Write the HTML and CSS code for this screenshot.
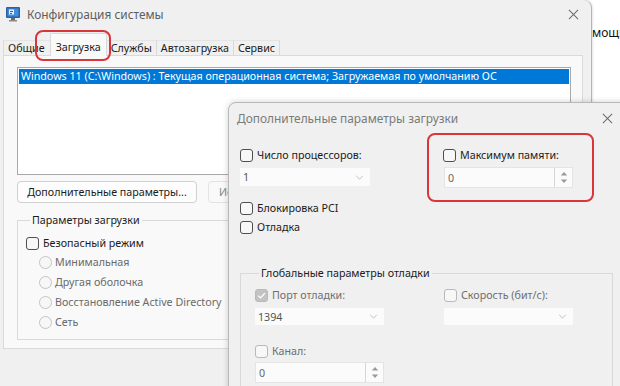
FILE: index.html
```html
<!DOCTYPE html>
<html lang="ru">
<head>
<meta charset="utf-8">
<title>Конфигурация системы</title>
<link rel="stylesheet" href="styles.css">
</head>
<body>
<div class="desktop">
  <div class="window">
    <div class="titlebar">
      <svg class="app-icon" viewBox="0 0 16 16">
        <rect x="1" y="1" width="14" height="11" rx="1" fill="#2c5fa8"/>
        <rect x="2.5" y="2.5" width="11" height="8" fill="#3d8de0"/>
        <rect x="4" y="3.5" width="5" height="5" fill="#e9f2fb"/>
        <rect x="5" y="5" width="3" height="1" fill="#2c5fa8"/>
        <rect x="5" y="7" width="2" height="1" fill="#2c5fa8"/>
        <rect x="6" y="12" width="4" height="2" fill="#6b6b6b"/>
        <rect x="4" y="14" width="8" height="1.5" fill="#8a8a8a"/>
      </svg>
      <span class="title">Конфигурация системы</span>
      <svg class="close" viewBox="0 0 12 12"><path d="M1 1 L11 11 M11 1 L1 11" stroke="#6a6a6a" stroke-width="1.1" fill="none"/></svg>
    </div>
    <div class="tabs">
      <div class="tab">Общие</div>
      <div class="tab active">Загрузка</div>
      <div class="tab">Службы</div>
      <div class="tab">Автозагрузка</div>
      <div class="tab">Сервис</div>
    </div>
    <div class="panel">
      <div class="listbox">
        <div class="list-item selected">Windows 11 (C:\Windows) : Текущая операционная система; Загружаемая по умолчанию ОС</div>
      </div>
      <div class="btn-row">
        <div class="btn">Дополнительные параметры...</div>
        <div class="btn disabled">Использовать по умолчанию</div>
      </div>
      <fieldset class="group boot-group">
        <legend>Параметры загрузки</legend>
        <div class="check-row"><span class="cb"></span><span>Безопасный режим</span></div>
        <div class="radios">
          <div class="radio-row"><span class="rb"></span><span>Минимальная</span></div>
          <div class="radio-row"><span class="rb"></span><span>Другая оболочка</span></div>
          <div class="radio-row"><span class="rb"></span><span>Восстановление Active Directory</span></div>
          <div class="radio-row"><span class="rb"></span><span>Сеть</span></div>
        </div>
      </fieldset>
    </div>
  </div>
  <div class="behind">мощн</div>

  <div class="highlight hl-tab"></div>

  <div class="dialog">
    <div class="dlg-title">
      <span>Дополнительные параметры загрузки</span>
      <svg class="close dlg-close" viewBox="0 0 12 12"><path d="M1 1 L11 11 M11 1 L1 11" stroke="#6a6a6a" stroke-width="1.1" fill="none"/></svg>
    </div>
    <div class="dlg-body">
      <div class="cols">
        <div class="col">
          <div class="check-row"><span class="cb"></span><span>Число процессоров:</span></div>
          <div class="select cpu-select"><span>1</span><svg class="chev" viewBox="0 0 10 6"><path d="M1 1 L5 5 L9 1" stroke="#b4b4b4" fill="none"/></svg></div>
          <div class="check-row pci"><span class="cb"></span><span>Блокировка PCI</span></div>
          <div class="check-row dbg"><span class="cb"></span><span>Отладка</span></div>
        </div>
        <div class="col">
          <div class="check-row"><span class="cb"></span><span>Максимум памяти:</span></div>
          <div class="spin mem-spin">
            <span class="spin-val">0</span>
            <div class="spin-btns">
              <svg viewBox="0 0 10 6"><path d="M1 5.5 L5 1 L9 5.5 Z" fill="#9a9a9a"/></svg>
              <svg viewBox="0 0 10 6"><path d="M1 0.5 L5 5 L9 0.5 Z" fill="#9a9a9a"/></svg>
            </div>
          </div>
        </div>
      </div>
      <fieldset class="group debug-group">
        <legend>Глобальные параметры отладки</legend>
        <div class="cols">
          <div class="col">
            <div class="check-row disabled"><span class="cb checked"><svg viewBox="0 0 12 12"><path d="M2.5 6.2 L5 8.6 L9.6 3.6" stroke="#fff" stroke-width="1.4" fill="none"/></svg></span><span>Порт отладки:</span></div>
            <div class="select port-select"><span>1394</span><svg class="chev" viewBox="0 0 10 6"><path d="M1 1 L5 5 L9 1" stroke="#b4b4b4" fill="none"/></svg></div>
            <div class="check-row disabled channel"><span class="cb"></span><span>Канал:</span></div>
            <div class="spin chan-spin">
              <span class="spin-val">0</span>
              <div class="spin-btns">
                <svg viewBox="0 0 10 6"><path d="M1 5.5 L5 1 L9 5.5 Z" fill="#9a9a9a"/></svg>
                <svg viewBox="0 0 10 6"><path d="M1 0.5 L5 5 L9 0.5 Z" fill="#9a9a9a"/></svg>
              </div>
            </div>
          </div>
          <div class="col">
            <div class="check-row disabled"><span class="cb"></span><span>Скорость (бит/с):</span></div>
            <div class="select speed-select"><span></span><svg class="chev" viewBox="0 0 10 6"><path d="M1 1 L5 5 L9 1" stroke="#b4b4b4" fill="none"/></svg></div>
          </div>
        </div>
      </fieldset>
    </div>
  </div>

  <div class="highlight hl-mem"></div>
</div>
</body>
</html>
```
FILE: styles.css
```css
* { box-sizing: border-box; }
html, body { margin: 0; padding: 0; }
body {
  width: 620px;
  height: 386px;
  overflow: hidden;
  background: #ffffff;
  font-family: "Noto Sans", "Open Sans", sans-serif;
  font-size: 10.7px;
  color: #1b1b1b;
}
.desktop {
  position: relative;
  width: 620px;
  height: 386px;
  overflow: hidden;
  display: flex;
  align-items: flex-start;
}
.window {
  position: relative;
  z-index: 1;
  flex: none;
  width: 592px;
  height: 400px;
  background: #f0f0f0;
  border-right: 1px solid #b5b5b5;
  border-top-right-radius: 8px;
  box-shadow: 1px 0 2px rgba(0,0,0,0.10);
}
.behind {
  flex: none;
  margin: 24px 0 0 0;
  font-size: 12px;
  color: #111;
  white-space: nowrap;
}
.titlebar {
  height: 30px;
  display: flex;
  align-items: center;
  padding-left: 5px;
  padding-bottom: 2px;
}
.app-icon { width: 16px; height: 16px; flex: none; }
.title {
  margin-left: 6px;
  font-size: 11.9px;
  color: #5e5e5e;
  white-space: nowrap;
}
.close { width: 11px; height: 11px; flex: none; }
.titlebar .close { margin-left: auto; margin-right: 12px; }

.tabs {
  display: flex;
  align-items: flex-end;
  height: 25px;
  padding-left: 3px;
}
.tab {
  height: 15px;
  line-height: 14px;
  padding: 0 4px;
  border-right: 1px solid #dadada;
  border-top: 1px solid #e4e4e4;
  white-space: nowrap;
}
.tab:first-child { border-left: 1px solid #dadada; padding: 0 5px 0 4px; }
.tab.active {
  position: relative;
  z-index: 1;
  height: 23px;
  padding: 6px 5px 0;
  background: #f9f9f9;
  border: 1px solid #dadada;
  border-bottom: none;
  margin-bottom: -1px;
  margin-left: -1px;
}
.panel {
  margin-left: 3px;
  width: 580px;
  height: 294px;
  border: 1px solid #dadada;
  background: #f9f9f9;
  padding: 11px 0 0 13px;
}
.listbox {
  width: 554px;
  height: 108px;
  border: 1px solid #a9a9a9;
  background: #fff;
  padding: 1px;
}
.list-item {
  height: 15px;
  line-height: 15px;
  padding-left: 2px;
  white-space: nowrap;
  overflow: hidden;
}
.list-item.selected { background: #0078d7; color: #fff; }
.btn-row {
  display: flex;
  gap: 11px;
  margin-top: 6px;
}
.btn {
  width: 180px;
  height: 22px;
  line-height: 20px;
  text-align: center;
  border: 1px solid #d0d0d0;
  border-radius: 4px;
  background: #fdfdfd;
  white-space: nowrap;
}
.btn.disabled { color: #8a8a8a; background: #f9f9f9; border-color: #e2e2e2; text-align: left; padding-left: 10px; overflow: hidden; }

.group {
  margin: 0;
  border: 1px solid #d9d9d9;
  border-radius: 0;
}
.group legend { padding: 0 2px; margin-left: 4px; white-space: nowrap; line-height: 14px; }
.boot-group {
  width: 350px;
  height: 127px;
  margin-top: 10px;
  padding: 9px 8px 0 8px;
}
.check-row {
  display: flex;
  align-items: center;
  gap: 4px;
  height: 14px;
  line-height: 14px;
  white-space: nowrap;
}
.cb {
  width: 13px;
  height: 13px;
  flex: none;
  border: 1px solid #4f4f4f;
  border-radius: 3px;
  background: #f7f7f7;
  display: flex;
}
.cb svg { width: 100%; height: 100%; }
.cb.checked { background: #c3c3c3; border-color: #c3c3c3; }
.disabled .cb { border-color: #b9b9b9; }
.disabled.check-row { color: #6e6e6e; }
.radios {
  margin-top: 6px;
  padding-left: 13px;
  display: flex;
  flex-direction: column;
  gap: 7px;
  color: #6a6a6a;
}
.radio-row {
  display: flex;
  align-items: center;
  gap: 3px;
  height: 13px;
  line-height: 13px;
  white-space: nowrap;
}
.rb {
  width: 13px;
  height: 13px;
  flex: none;
  border: 1px solid #c4c4c4;
  border-radius: 50%;
  background: #f7f7f7;
}

.dialog {
  position: absolute;
  z-index: 2;
  left: 228px;
  top: 102px;
  width: 420px;
  height: 320px;
  background: #f0f0f0;
  border: 1px solid #b8b8b8;
  border-top-left-radius: 8px;
  box-shadow: 0 0 6px rgba(0,0,0,0.18);
}
.dlg-title {
  display: flex;
  align-items: center;
  height: 30px;
  padding-left: 8px;
  font-size: 11.9px;
  color: #7a7a7a;
  white-space: nowrap;
}
.dlg-close { margin-left: auto; margin-right: 34px; }
.dlg-body { padding: 15px 0 0 11px; }
.cols { display: flex; }
.dlg-body > .cols .col:first-child { width: 203px; }
.select {
  display: flex;
  align-items: center;
  justify-content: space-between;
  height: 18px;
  background: #fbfbfb;
  padding: 0 6px 0 3px;
  color: #555;
}
.chev { width: 9px; height: 5px; }
.cpu-select { width: 130px; margin-top: 6px; }
.pci { margin-top: 15px; }
.dbg { margin-top: 5px; }
.spin {
  display: flex;
  align-items: center;
  justify-content: space-between;
  width: 129px;
  height: 21px;
  background: #fbfbfb;
  border: 1px solid #e4e4e4;
  padding-left: 3px;
  color: #6a6a6a;
}
.spin-btns {
  width: 18px;
  height: 100%;
  border-left: 1px solid #d6d6d6;
  display: flex;
  flex-direction: column;
  justify-content: space-around;
  align-items: center;
  padding: 2px 0;
}
.spin-btns svg { width: 8px; height: 5px; }
.mem-spin { margin-top: 5px; margin-left: 1px; }
.debug-group {
  width: 373px;
  margin-top: 32px;
  margin-left: 0;
  padding: 8px 0 0 14px;
  height: 140px;
}
.debug-group .col:first-child { width: 189px; }
.port-select { width: 129px; height: 17px; margin-top: 6px; }
.speed-select { width: 129px; height: 17px; margin-top: 6px; }
.channel { margin-top: 19px; }
.chan-spin { margin-top: 4px; }

.highlight {
  position: absolute;
  z-index: 3;
  border: 2.5px solid #d8363b;
  border-radius: 8px;
}
.hl-tab { left: 35px; top: 30px; width: 76px; height: 31px; }
.hl-mem { left: 427px; top: 133px; width: 167px; height: 69px; }
```
